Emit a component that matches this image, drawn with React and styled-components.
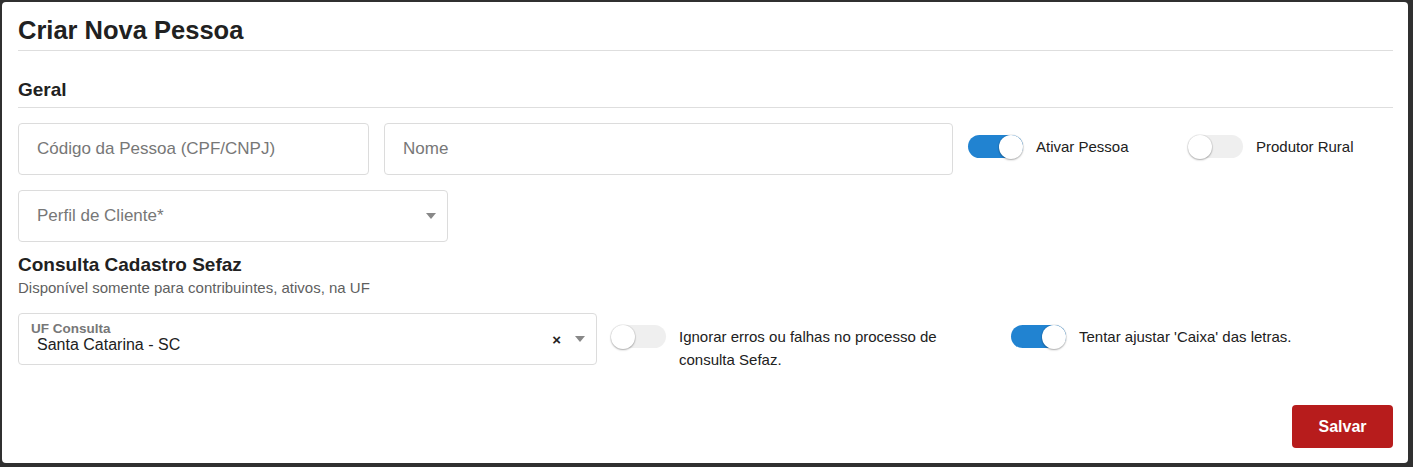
import React from "react";
import styled, { createGlobalStyle } from "styled-components";

const GlobalStyle = createGlobalStyle`
  html, body {
    margin: 0;
    padding: 0;
    background: #303030;
  }
  body {
    font-family: "Liberation Sans", Arial, sans-serif;
    color: #212121;
  }
  * { box-sizing: border-box; }
`;

const Card = styled.div`
  margin: 2px 5px 4px 2px;
  background: #fff;
  border-radius: 4px;
  padding: 13px 15px 15px 16px;
`;

const Title = styled.h1`
  margin: 0;
  font-size: 25.5px;
  line-height: 30px;
  font-weight: 700;
  padding-bottom: 5px;
  border-bottom: 1px solid #dedede;
`;

const SectionTitle = styled.h2`
  margin: ${(p) => p.$top || 0}px 0 0;
  font-size: 19px;
  line-height: 22px;
  font-weight: 700;
  padding-bottom: ${(p) => (p.$line ? 6 : 0)}px;
  border-bottom: ${(p) => (p.$line ? "1px solid #dedede" : "none")};
`;

const Subtitle = styled.p`
  margin: 3px 0 0;
  font-size: 15px;
  line-height: 18px;
  color: #5f5f5f;
`;

const Row = styled.div`
  display: grid;
  grid-template-columns: ${(p) => p.$cols};
  column-gap: ${(p) => p.$gap || 15}px;
  align-items: start;
  margin-top: ${(p) => p.$top || 15}px;
`;

const TextInput = styled.input`
  height: 52px;
  width: 100%;
  border: 1px solid #dcdcdc;
  border-radius: 4px;
  padding: 0 18px;
  font-family: "Liberation Sans", Arial, sans-serif;
  font-size: 17px;
  color: #212121;
  outline: none;
  &::placeholder {
    color: #777;
  }
`;

const SelectBox = styled.div`
  position: relative;
  height: 52px;
  border: 1px solid #dcdcdc;
  border-radius: 4px;
  display: flex;
  align-items: center;
  padding: 0 10px 0 18px;
`;

const SelectText = styled.div`
  flex: 1;
  font-size: 17px;
  color: #777;
`;

const FloatLabel = styled.div`
  position: absolute;
  left: 12px;
  top: 7px;
  font-size: 13.5px;
  font-weight: 700;
  color: #777;
`;

const SelectValue = styled.div`
  flex: 1;
  font-size: 16px;
  color: #212121;
  padding-top: 12px;
`;

const Clear = styled.span`
  font-size: 15px;
  font-weight: 700;
  color: #222;
  margin-right: 14px;
  line-height: 1;
`;

const Caret = styled.span`
  width: 0;
  height: 0;
  border-left: 5px solid transparent;
  border-right: 5px solid transparent;
  border-top: 6px solid #888;
  margin-right: 1px;
`;

const ToggleCell = styled.div`
  display: flex;
  align-items: flex-start;
  padding-top: 12px;
  padding-right: ${(p) => p.$pr || 0}px;
`;

const Track = styled.div`
  position: relative;
  flex: none;
  width: 55px;
  height: 23px;
  border-radius: 12px;
  background: ${(p) => (p.$on ? "#2183d1" : "#efefef")};
  margin-right: 13px;
`;

const Knob = styled.div`
  position: absolute;
  top: -0.5px;
  left: ${(p) => (p.$on ? "31px" : "0")};
  width: 24px;
  height: 24px;
  border-radius: 50%;
  background: #fff;
  box-shadow: 0 1px 2px rgba(0, 0, 0, 0.3), 0 0 0 1px rgba(0, 0, 0, 0.05);
`;

const ToggleLabel = styled.span`
  font-size: 15px;
  line-height: 23px;
  color: #212121;
`;

const Footer = styled.div`
  display: flex;
  justify-content: flex-end;
  margin-top: 34px;
`;

const SaveButton = styled.button`
  width: 101px;
  height: 43px;
  border: none;
  border-radius: 4px;
  background: #b71c1c;
  color: #fff;
  font-family: "Liberation Sans", Arial, sans-serif;
  font-size: 16px;
  font-weight: 700;
`;

function Toggle({ on, label, pr }) {
  return (
    <ToggleCell $pr={pr}>
      <Track $on={on}>
        <Knob $on={on} />
      </Track>
      <ToggleLabel>{label}</ToggleLabel>
    </ToggleCell>
  );
}

export default function App() {
  return (
    <>
      <GlobalStyle />
      <Card>
        <Title>Criar Nova Pessoa</Title>

        <SectionTitle $top={28} $line>
          Geral
        </SectionTitle>
        <Row $cols="351px 569px 205px 1fr">
          <TextInput placeholder="Código da Pessoa (CPF/CNPJ)" />
          <TextInput placeholder="Nome" />
          <Toggle on label="Ativar Pessoa" />
          <Toggle label="Produtor Rural" />
        </Row>
        <Row $cols="430px">
          <SelectBox>
            <SelectText>Perfil de Cliente*</SelectText>
            <Caret />
          </SelectBox>
        </Row>

        <SectionTitle $top={12}>Consulta Cadastro Sefaz</SectionTitle>
        <Subtitle>Disponível somente para contribuintes, ativos, na UF</Subtitle>
        <Row $cols="579px 386px 1fr" $gap={14} $top={16}>
          <SelectBox>
            <FloatLabel>UF Consulta</FloatLabel>
            <SelectValue>Santa Catarina - SC</SelectValue>
            <Clear>×</Clear>
            <Caret />
          </SelectBox>
          <Toggle
            label="Ignorar erros ou falhas no processo de consulta Sefaz."
            pr={30}
          />
          <Toggle on label="Tentar ajustar 'Caixa' das letras." />
        </Row>

        <Footer>
          <SaveButton>Salvar</SaveButton>
        </Footer>
      </Card>
    </>
  );
}
